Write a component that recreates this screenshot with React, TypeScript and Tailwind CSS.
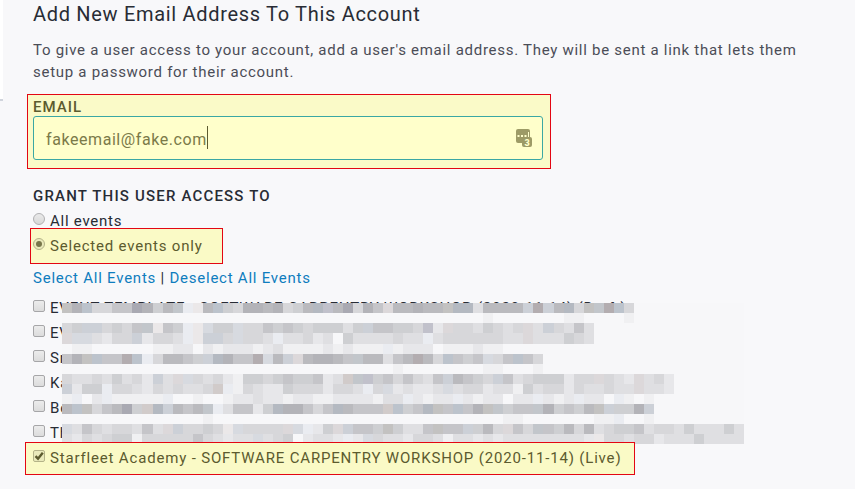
const palette: Record<string, string> = {
  a: '#f7f7f9', b: '#f0f0f2', c: '#e7e7ea', d: '#dfdfe2', e: '#d7d7da',
  f: '#cecfd2', g: '#c5c5c9', h: '#bababe', i: '#b3b3b8', q: '#b4b9c1',
  B: '#bcc3cc', P: '#a9a9b2', p: '#c1c1cb', R: '#b3adb0', T: '#d1cbca',
  t: '#dcd8da', u: '#d7dae0', v: '#ccd0d7', y: '#c2c6cb', s: '#c3c2c1',
  w: '#ebe8e9', L: '#eaecf1',
};

const mosaic = [
  'siBeeggPifhyLwhBf' + 'eiihiefhqphPeigth' + 'hihhsqqdhhhhvRvhq' + 'esyRBeaaaaaaaaaaa',
  'aaaaaaaaaaaaaaaaa' + 'aaaaaaaaaaaaaaaaa' + 'aaaaaaaabaaaaaaab' + 'baaaabaaaaaaaaaaa',
  'efvvefegywgfLwuff' + 'ueegfgfefffdfvggf' + 'fepcteedfedetdved' + 'gdaaaaaaaaaaaaaaa',
  'tuudceevceedLwvve' + 'ueedLddecdafdddde' + 'ddLdeeeeeeddtdddf' + 'edaaaaaaaaaaaaaaa',
  'abbaaaaaabbccacbc' + 'ccbcdbbbbcbcbbbLb' + 'cccabbbcbbaaaaaaa' + 'aaaaaaaaaaaaaaaaa',
  'gisBggRBLehhgfvqi' + 'ggRuhvthiihgyhhdg' + 'hRheBgfguegBgeaaa' + 'aaaaaaaaaaaaaaaaa',
  'aaaaaaaaaaaaaaaaa' + 'aaaaaaaaaaaaaaaab' + 'aaaaaaaabbaaabaaa' + 'aaaaaaaaaaaaaaaaa',
  'eddedfdecvdtuedec' + 'bffefgffgcdTypfge' + 'gedgvhgfevgdefffc' + 'eetedctdecaaaaaaa',
  'vcffLeedcededdeTL' + 'bedccfeeeceedLeuc' + 'dccdudeecddbfdeec' + 'eddeddtddcaaaaaaa',
  'bLacLbbbbbLaabaab' + 'ccdccbccbbccccbdd' + 'LcbccLcbccaccLcbc' + 'LccaLbabaaaaaaaaa',
  'hBseghPfTqvhghyLd' + 'ggcfqiigegqhgggTB' + 'fgqsgBgisyfggyifg' + 'fhsvffivaaaaaaaaa',
  'aaaaaaaaaaaaaabaa' + 'aaaaaaaaaaaaaaaaa' + 'aaaaaaaaaabbaaaaa' + 'aabbLaabaaaaaaaaa',
  'udgedeedgdtveefew' + 'ueeeetuLcftvggfsf' + 'ddgsggvfhetgeygfh' + 'ehdeffgdeedfdddfd',
  'dcedeffbeeeeegedc' + 'ddudefacddcLcuedd' + 'ceedbddcdcddddddd' + 'dcweedeecdddfdddd',
];

const eventNames = [
  'EVENT TEMPLATE - SOFTWARE CARPENTRY WORKSHOP (2020-11-14) (Draft)',
  'EV', 'Sn', 'Ka', 'Be', 'Th',
];

function Checkbox() {
  return <span className="h-3 w-3 shrink-0 rounded-[2px] border border-[#a6a6a8] bg-linear-to-b from-[#ececec] to-[#dcdcdc]" />;
}

function Mosaic() {
  return (
    <div className="absolute top-[3.4px] left-[62.3px] grid h-[140.4px] w-[681.7px] grid-cols-[repeat(68,minmax(0,1fr))] grid-rows-[repeat(14,minmax(0,1fr))]">
      {mosaic.join('').split('').map((c, i) => (
        <span key={i} style={{ backgroundColor: palette[c] }} />
      ))}
    </div>
  );
}

export default function App() {
  return (
    <div className="flex h-[489px] w-[855px] overflow-hidden bg-[#f8f8fa] font-[Roboto,'Liberation_Sans',sans-serif] text-[15px] whitespace-nowrap text-[#282c35]">
      <div className="h-[101px] w-[3px] shrink-0 border-b-2 border-[#d0d4dc] bg-white" />
      <main className="-ml-[3px] flex w-[855px] shrink-0 flex-col">
        <h1 className="h-[37px] pl-[33px] text-[20px] leading-[28px] tracking-[0.69px]">Add New Email Address To This Account</h1>
        <p className="h-[57px] pt-[2px] pl-[33px] leading-[22px] tracking-[0.72px] text-[#4b4d57]">
          To give a user access to your account, add a user's email address. They will be sent a link that lets them
          <br />
          setup a password for their account.
        </p>

        <section className="ml-[27px] flex h-[75px] w-[524px] flex-col border border-[#e30613] bg-[#fafac8] pl-[5px]">
          <label className="h-[21px] text-[15px] leading-[24px] font-medium tracking-[1px] text-[#5c5b2f]">EMAIL</label>
          <div className="flex h-[44px] w-[510px] items-center rounded-[3px] border border-[#3aa7a4] bg-[#ffffcb] pr-[9px] pl-[12px]">
            <span className="pt-[3px] text-[16px] tracking-[0.57px] text-[#7b7a49]">fakeemail@fake.com</span>
            <span className="-mt-[1px] h-[23px] w-px bg-[#5c5b2f]" />
            <svg className="ml-auto" width="17" height="19" viewBox="0 0 17 19">
              <rect x="0" y="0" width="14" height="14" rx="2" fill="#9d9b66" />
              <path d="M1.500 6h2v2h-2zM5 6h2v2H5zM8.500 6h2v2h-2zM12 3h1v5h-1z" fill="#ffffcb" />
              <rect x="6" y="8" width="10" height="10" rx="2" fill="#9d9b66" />
              <text x="8.500" y="16.500" fontSize="9" fontWeight="900" fill="#ffffcb">3</text>
            </svg>
          </div>
        </section>

        <h2 className="h-[40px] pt-[16px] pl-[33px] text-[15px] leading-[22px] font-medium tracking-[1.18px]">GRANT THIS USER ACCESS TO</h2>
        <div className="flex h-[19px] pl-[33px]">
          <span className="mt-[4px] h-[12px] w-[12px] rounded-full border border-[#b0b0b2] bg-linear-to-b from-[#eaeaea] to-[#d8d8d8]" />
          <span className="ml-[5px] leading-[24px] tracking-[0.75px]">All events</span>
        </div>
        <div className="ml-[30px] flex h-[36px] w-[193px] border border-[#e30613] bg-[#fafac6] pl-[2px]">
          <span className="mt-[9px] flex h-[12px] w-[12px] items-center justify-center rounded-full border border-[#b4b388] bg-[#eaeabb]">
            <span className="h-[6px] w-[6px] rounded-full bg-[#77764a]" />
          </span>
          <span className="ml-[5px] leading-[34px] tracking-[0.8px] text-[#5c5b2f]">Selected events only</span>
        </div>
        <div className="h-[36px] pt-[3px] pl-[33px] leading-[22px] tracking-[0.76px]">
          <a className="text-[#0f7dbe]">Select All Events</a> | <a className="text-[#0f7dbe]">Deselect All Events</a>
        </div>

        <div className="relative h-[142px]">
          {eventNames.map((name) => (
            <div key={name} className="flex h-[25px] pl-[33px]">
              <span className="flex"><Checkbox /></span>
              <span className="ml-[5px] leading-[16px] tracking-[0.83px]">{name}</span>
            </div>
          ))}
          <Mosaic />
        </div>
        <div className="relative ml-[25px] flex h-[33px] w-[610px] shrink-0 border border-[#e30613] bg-[#fafac6] pl-[7px]">
          <svg className="mt-[7px] shrink-0" width="12" height="12" viewBox="0 0 12 12">
            <rect x=".5" y=".5" width="11" height="11" rx="1.500" fill="#eaeabb" stroke="#b4b388" />
            <path d="M2.500 6.200L5 8.700L9.800 2.800" fill="none" stroke="#5c5b2f" strokeWidth="2.400" />
          </svg>
          <span className="ml-[5px] leading-[31px] tracking-[0.83px] text-[#5c5b2f]">Starfleet Academy - SOFTWARE CARPENTRY WORKSHOP (2020-11-14) (Live)</span>
        </div>
      </main>
    </div>
  );
}
